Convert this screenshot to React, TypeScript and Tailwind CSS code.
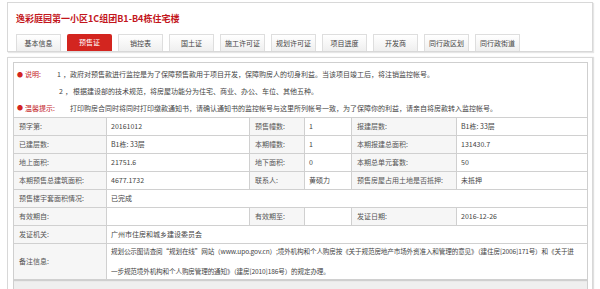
import React from 'react';

const tabs = ['基本信息', '预售证', '销控表', '国土证', '施工许可证', '规划许可证', '项目进度', '开发商', '同行政区划', '同行政街道'];

type Cell = { text: string; label?: boolean; span?: number };

const rows: Cell[][] = [
  [
    { text: '预字第:', label: true },
    { text: '20161012' },
    { text: '预售幢数:', label: true },
    { text: '1' },
    { text: '报建层数:', label: true },
    { text: 'B1栋: 33层' },
  ],
  [
    { text: '已建层数:', label: true },
    { text: 'B1栋: 33层' },
    { text: '本期幢数:', label: true },
    { text: '1' },
    { text: '本期报建总面积:', label: true },
    { text: '131430.7' },
  ],
  [
    { text: '地上面积:', label: true },
    { text: '21751.6' },
    { text: '地下面积:', label: true },
    { text: '0' },
    { text: '本期总单元套数:', label: true },
    { text: '50' },
  ],
  [
    { text: '本期预售总建筑面积:', label: true },
    { text: '4677.1732' },
    { text: '联系人:', label: true },
    { text: '黄硕力' },
    { text: '预售房屋占用土地是否抵押:', label: true },
    { text: '未抵押' },
  ],
  [
    { text: '预售楼宇套面积情况:', label: true },
    { text: '已完成', span: 5 },
  ],
  [
    { text: '有效期自:', label: true },
    { text: '' },
    { text: '有效期至:', label: true },
    { text: '' },
    { text: '发证日期:', label: true },
    { text: '2016-12-26' },
  ],
  [
    { text: '发证机关:', label: true },
    { text: '广州市住房和城乡建设委员会', span: 5 },
  ],
];

const App: React.FC = () => {
  return (
    <div
      className="w-[600px] h-[289px] overflow-hidden bg-white text-[7px] leading-none text-[#333]"
      style={{ fontFamily: '"Noto Sans CJK SC", "Noto Sans", sans-serif' }}
    >
      {/* Header box */}
      <div className="mx-[7px] mt-[2px] h-[50px] border border-[#d8d8d8] shadow-[1px_1px_1px_#e6e6e6] px-[8px] flex flex-col">
        <div className="pt-[10px] text-[9px] font-bold text-[#c3161c] leading-[12px]">
          逸彩庭园第一小区1C组团B1-B4栋住宅楼
        </div>
        <div className="mt-auto flex gap-[6px]">
          {tabs.map((t) =>
            t === '预售证' ? (
              <div
                key={t}
                className="w-[45px] h-[17px] flex items-center justify-center rounded-t-[2px] bg-[#d3251f] text-white"
              >
                {t}
              </div>
            ) : (
              <div
                key={t}
                className="w-[45px] h-[17px] flex items-center justify-center border border-b-0 border-[#dedede] bg-gradient-to-b from-white to-[#efefef] text-[#444]"
              >
                {t}
              </div>
            )
          )}
        </div>
      </div>

      {/* Content frame */}
      <div className="mx-[7px] mt-[5px] h-[240px] border border-[#d8d8d8] border-b-0 shadow-[1px_0_1px_#e0e0e0] pl-[5px] pr-[4px] pt-[4px]">
        <div className="border border-[#cfcfcf] border-b-0 h-full flex flex-col bg-[#efefef]">
          {/* Notes */}
          <div className="bg-white pt-[3px] pb-[1px] text-[#444]">
            <div className="flex items-center h-[17px]">
              <span className="ml-[3px] w-[6px] text-[#d3251f] text-[6px]">●</span>
              <span className="ml-[2px] w-[30px] text-[#c3161c]">说明:</span>
              <span className="ml-[2px]">1</span>
              <span className="ml-[2px]">，</span>
              <span>政府对预售款进行监控是为了保障预售款用于项目开发，保障购房人的切身利益。当该项目竣工后，将注销监控帐号。</span>
            </div>
            <div className="flex items-center h-[17px]">
              <span className="ml-[45px]">2</span>
              <span className="ml-[2px]">，</span>
              <span className="ml-[1px]">根据建设部的技术规范，将房屋功能分为住宅、商业、办公、车位、其他五种。</span>
            </div>
            <div className="flex items-center h-[16px]">
              <span className="ml-[3px] w-[6px] text-[#d3251f] text-[6px]">●</span>
              <span className="ml-[2px] w-[44px] text-[#c3161c]">温馨提示:</span>
              <span className="ml-[1px]">打印购房合同时将同时打印缴款通知书，请确认通知书的监控帐号与这里所列帐号一致，为了保障你的利益，请亲自将房款转入监控帐号。</span>
            </div>
          </div>

          {/* Table */}
          <div className="bg-white shadow-[0_1px_1px_#cfcfcf]">
            <div className="grid grid-cols-[92px_143px_55px_47px_105px_1fr] border-t border-[#d0d0d0]">
              {rows.map((row, ri) =>
                row.map((c, ci) => (
                  <div
                    key={`${ri}-${ci}`}
                    className={`h-[18px] flex items-center border-b border-[#d0d0d0] px-[4px] ${
                      ci > 0 ? 'border-l' : ''
                    } ${c.label ? 'bg-[#f6f6f6] text-[#555] pl-[5px]' : 'bg-white text-[#444]'} ${
                      c.span === 5 ? 'col-span-5' : ''
                    }`}
                  >
                    {c.text}
                  </div>
                ))
              )}
              <div className="h-[36px] flex items-center bg-[#f6f6f6] text-[#555] pl-[5px] border-b border-[#d0d0d0]">
                备注信息:
              </div>
              <div className="col-span-5 h-[36px] flex flex-col justify-center gap-[13px] px-[4px] border-l border-b border-[#d0d0d0] whitespace-nowrap overflow-hidden text-[6.6px] tracking-[-0.15px] text-[#444]">
                <span>
                  规划公示图请查阅“规划在线”网站（www.upo.gov.cn）;境外机构和个人购房按《关于规范房地产市场外资准入和管理的意见》（建住房[2006]171号）和《关于进
                </span>
                <span>一步规范境外机构和个人购房管理的通知》（建房[2010]186号）的规定办理。</span>
              </div>
            </div>
          </div>
        </div>
      </div>
    </div>
  );
};

export default App;
